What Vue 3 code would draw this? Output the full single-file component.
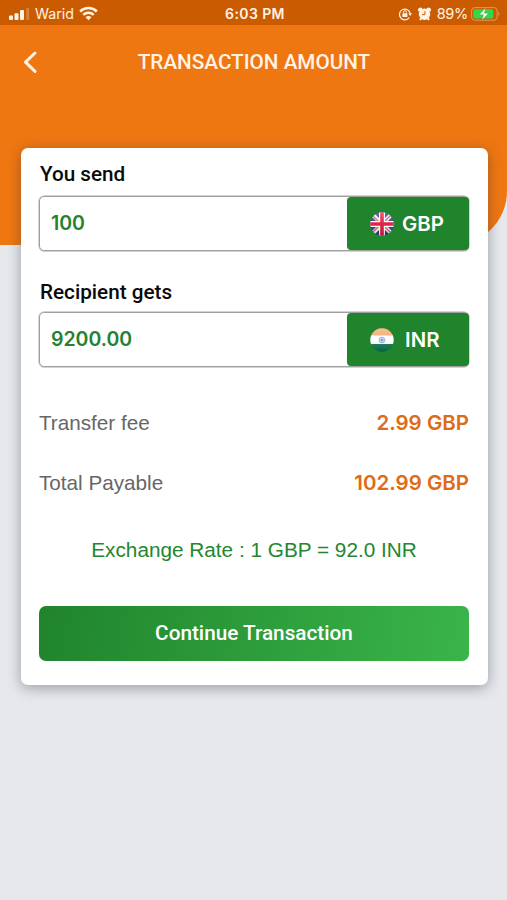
<script setup>
const transfers = [
  { label: 'You send', amount: '100', code: 'GBP', flag: 'gb' },
  { label: 'Recipient gets', amount: '9200.00', code: 'INR', flag: 'in' },
]
const fees = [
  { label: 'Transfer fee', value: '2.99 GBP', id: 'fee' },
  { label: 'Total Payable', value: '102.99 GBP', id: 'total' },
]
</script>

<template>
  <div class="screen">
    <header class="hero">
      <div class="status">
        <div class="carrier">
          <svg class="signal" width="21" height="13" viewBox="0 0 21 13" fill="#fff3e6">
            <rect x="0" y="8.600" width="4" height="4.400" rx="1" />
            <rect x="5.500" y="6.200" width="4" height="6.800" rx="1" />
            <rect x="11" y="3" width="4" height="10" rx="1" />
            <rect x="17.200" y="1" width="3" height="12" rx="1" opacity=".25" />
          </svg>
          <span class="carrier-name">Warid</span>
          <svg class="wifi" width="19" height="15" viewBox="0 0 20 15" fill="none" stroke="#fff3e6" stroke-width="2.700">
            <path d="M1.200 5.400C6.200.6 13.800.6 18.800 5.400" />
            <path d="M4.500 9C7.600 6 12.400 6 15.500 9" />
            <path d="M10 14.600 6.900 11.400C8.500 9.800 11.500 9.800 13.100 11.400Z" fill="#fff3e6" stroke="none" />
          </svg>
        </div>
        <span class="clock">6:03 PM</span>
        <div class="indicators">
          <svg class="lock" width="14" height="14" viewBox="0 0 14 14" fill="none" stroke="#fff3e6" stroke-width="1.200">
            <path d="M11.200 10.700A5.400 5.400 0 1 1 12.200 6.500" />
            <path d="M10.300 6.300H14L12.200 9.100Z" fill="#fff3e6" stroke="none" />
            <rect x="4.400" y="6.300" width="5" height="3.700" rx=".6" fill="#fff3e6" stroke="none" />
            <path d="M5.400 6.500V5.200a1.500 1.500 0 0 1 3 0v1.300" stroke-width="1" />
          </svg>
          <svg class="alarm" width="13" height="14" viewBox="0 0 13 14" fill="#fff3e6">
            <circle cx="6.500" cy="7.200" r="5.700" />
            <path d="M.8 4.800A2.300 2.300 0 0 1 4.200 1.300L4.800 3ZM12.200 4.800A2.300 2.300 0 0 0 8.800 1.300L8.200 3Z" />
            <path d="M1.900 12.800 3.500 11M11.100 12.800 9.500 11" stroke="#fff3e6" stroke-width="2" />
            <path d="M6.900 4.200V7.600H4" fill="none" stroke="#cb5b00" stroke-width="1" />
          </svg>
          <span class="percent">89%</span>
          <svg class="battery" width="30" height="14" viewBox="0 0 30 14">
            <rect x=".6" y=".6" width="25.600" height="12.600" rx="3.200" fill="none" stroke="#e29a5c" stroke-width="1" />
            <rect x="2.300" y="2.300" width="20" height="9.200" rx="1.700" fill="#32d74b" />
            <path d="M27.500 4.800Q29.600 6.900 27.500 9Z" fill="#e29a5c" />
            <path d="M14.800.8 8.200 7.700H12.400L10.800 13.200 17.600 6.200H13.400Z" fill="#fff" stroke="#3a9a2c" stroke-width=".4" />
          </svg>
        </div>
      </div>
      <div class="titlebar">
        <svg class="back" width="16" height="24" viewBox="0 0 16 24" fill="none" stroke="#fff3e6" stroke-width="3" stroke-linecap="round" stroke-linejoin="round">
          <path d="M13 3 3.500 12.200 13 21.400" />
        </svg>
        <h1 class="title"><span>TRANSACTION AMOUNT</span></h1>
      </div>
    </header>

    <main class="card">
      <section v-for="t in transfers" :key="t.code" class="transfer">
        <h2 class="label" :class="t.flag"><span>{{ t.label }}</span></h2>
        <div class="field">
          <div class="amount" :class="t.flag"><span>{{ t.amount }}</span></div>
          <div class="currency">
            <svg v-if="t.flag === 'gb'" class="flag" width="24" height="24" viewBox="0 0 24 24">
              <defs>
                <clipPath id="round"><circle cx="12" cy="12" r="11.700" /></clipPath>
                <linearGradient id="shade" x1="0" y1="0" x2="0" y2="1">
                  <stop offset="0" stop-color="#fff" stop-opacity=".3" />
                  <stop offset=".5" stop-color="#fff" stop-opacity=".08" />
                  <stop offset="1" stop-color="#000" stop-opacity=".2" />
                </linearGradient>
              </defs>
              <g clip-path="url(#round)">
                <rect width="24" height="24" fill="#29387f" />
                <path d="M1 1 23 23M23 1 1 23" stroke="#f7eef2" stroke-width="4.200" />
                <path d="M1 2 11 12M23 1 13 11M1 22 11 12M13 13 22 22" stroke="#d54a60" stroke-width="1.300" />
                <path d="M12 0V24M0 12H24" stroke="#fff" stroke-width="6" />
                <path d="M12 0V24M0 12H24" stroke="#db1236" stroke-width="3.600" />
                <rect width="24" height="24" fill="url(#shade)" />
              </g>
            </svg>
            <svg v-else class="flag" width="24" height="24" viewBox="0 0 24 24">
              <g clip-path="url(#round)">
                <rect width="24" height="8" fill="#f3a467" />
                <rect y="7.500" width="24" height="9" fill="#fff" />
                <rect y="16" width="24" height="8" fill="#08764a" />
                <circle cx="12" cy="12" r="2.900" fill="#c5d6ec" stroke="#94b0d6" stroke-width="1" />
                <circle cx="12" cy="12" r="1.200" fill="#6f95c8" />
                <rect width="24" height="24" fill="url(#shade)" />
              </g>
            </svg>
            <span class="code" :class="t.flag">{{ t.code }}</span>
          </div>
        </div>
      </section>

      <dl class="fees">
        <div v-for="f in fees" :key="f.id" class="fee" :class="f.id">
          <dt>{{ f.label }}</dt>
          <dd>{{ f.value }}</dd>
        </div>
      </dl>
      <p class="rate"><span>Exchange Rate : 1 GBP = 92.0 INR</span></p>
      <button class="continue" type="button"><span>Continue Transaction</span></button>
    </main>
  </div>
</template>

<style>
body { margin: 0; background: #e6e8ec; }
</style>

<style scoped>
.screen {
  display: flex;
  flex-direction: column;
  width: 507px;
  height: 900px;
  overflow: hidden;
  background: #e6e8ec;
  font-family: Roboto, "Liberation Sans", sans-serif;
}
h1, h2, p, dl, dd { margin: 0; }
svg { display: block; flex: none; }
.hero {
  flex: none;
  height: 245px;
  background: #ef7712;
  border-bottom-right-radius: 54px;
}
.status {
  display: grid;
  grid-template-columns: 1fr auto 1fr;
  align-items: center;
  height: 25px;
  padding: 2px 6px 0 9px;
  box-sizing: border-box;
  background: #cb5b00;
  color: #fff3e6;
  font-family: Inter, sans-serif;
}
.carrier, .indicators { display: flex; align-items: center; }
.carrier-name { margin-left: 5px; font-size: 14.2px; }
.wifi { margin-left: 5px; }
.signal { margin-bottom: 1px; }
.clock { font-size: 14px; font-weight: 600; letter-spacing: .4px; }
.indicators { justify-content: flex-end; }
.alarm { margin-left: 6px; }
.percent { margin-left: 6px; font-size: 14.5px; letter-spacing: -.3px; }
.battery { margin-left: 3px; }
.titlebar {
  display: grid;
  grid-template-columns: 40px 1fr 40px;
  align-items: center;
  height: 74px;
  padding: 0 21px 0 22px;
}
.title {
  text-align: center;
  color: #fff3e6;
  font-size: 20.7px;
  font-weight: 500;
  line-height: 24px;
}
.card {
  flex: none;
  width: 467px;
  height: 537px;
  margin: -97px 0 0 21px;
  padding: 12px 19px 0 18px;
  box-sizing: border-box;
  border-radius: 7px;
  background: #fff;
  box-shadow: 0 3px 14px rgba(40, 45, 60, .4);
}
.transfer { height: 116px; }
.label {
  padding-left: 1px;
  color: #0a0a0a;
  font-size: 20.7px;
  font-weight: 500;
  line-height: 28px;
}
.label.in { padding-top: 2px; }
.field {
  display: flex;
  height: 55px;
  margin-top: 8px;
  box-sizing: border-box;
  border: 1px solid #a0a0a0;
  border-radius: 5px;
  box-shadow: 0 0 0 .5px #a8a8a8;
}
.label.in + .field { margin-top: 6px; }
.amount {
  flex: 1;
  padding-left: 11px;
  color: #24812f;
  font: 600 19.5px/53px Inter, sans-serif;
}
.currency {
  display: flex;
  align-items: center;
  width: 122px;
  margin: 0 -1px 0 0;
  border-radius: 4px;
  background: #1f842c;
  color: #fff;
}
.flag { margin-left: 23px; }
.code { flex: 1; margin-left: 8px; font: 600 20.4px/24px Inter, sans-serif; }
.code.in { margin-left: 11px; }
.fee {
  display: flex;
  align-items: center;
  justify-content: space-between;
  height: 60px;
}
.fees { padding-top: 1px; }
.fee dt { color: #666; font: 20.7px/24px "Liberation Sans", sans-serif; }
.fee dd { color: #de6c16; font: 600 20.5px/24px Inter, sans-serif; }
.rate {
  margin-top: 23px;
  text-align: center;
  color: #24862f;
  font: 20.75px/28px "Liberation Sans", sans-serif;
}
.continue {
  display: block;
  width: 430px;
  height: 55px;
  margin-top: 42px;
  padding: 0;
  border: 0;
  border-radius: 7px;
  background: linear-gradient(100deg, #20842c, #3ab54a);
  color: #fff;
  font: 500 20.75px/55px Roboto, sans-serif;
}
</style>
